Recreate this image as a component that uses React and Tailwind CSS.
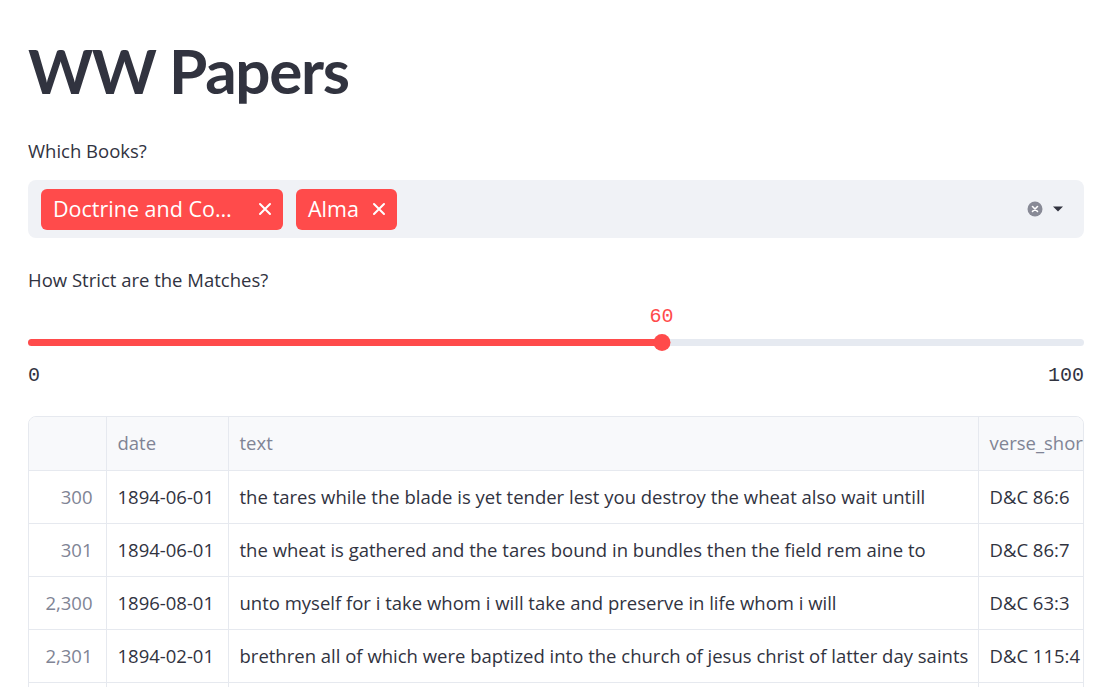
import React from 'react';

const rows = [
  { idx: '300', date: '1894-06-01', text: 'the tares while the blade is yet tender lest you destroy the wheat also wait untill', verse: 'D&C 86:6' },
  { idx: '301', date: '1894-06-01', text: 'the wheat is gathered and the tares bound in bundles then the field rem aine to', verse: 'D&C 86:7' },
  { idx: '2,300', date: '1896-08-01', text: 'unto myself for i take whom i will take and preserve in life whom i will', verse: 'D&C 63:3' },
  { idx: '2,301', date: '1894-02-01', text: 'brethren all of which were baptized into the church of jesus christ of latter day saints', verse: 'D&C 115:4' },
];

const mono = { fontFamily: '"Liberation Mono", monospace' };

function Tag({ label, width }) {
  return (
    <div className={`h-[41px] ${width} bg-[#ff4b4b] rounded-[6px] flex items-center justify-between pl-3 pr-[11px] text-white text-[21.5px]`}>
      <span className="whitespace-nowrap leading-[28px]">{label}</span>
      <svg width="14" height="14" viewBox="0 0 14 14" className="shrink-0 ml-2">
        <path d="M2 2 L12 12 M12 2 L2 12" stroke="white" strokeWidth="2" strokeLinecap="round" />
      </svg>
    </div>
  );
}

export default function App() {
  return (
    <div className="bg-white h-screen text-[#31333f] overflow-hidden" style={{ fontFamily: '"Open Sans", sans-serif' }}>
      <div className="pl-[28px] pr-[33px]">
        <h1 className="pt-[30px] text-[62px] font-bold leading-[80px] tracking-[-1.3px]" style={{ fontFamily: 'Lato, sans-serif' }}>WW Papers</h1>

        <div className="mt-[28px] text-[18.5px] leading-[25px]">Which Books?</div>
        <div className="mt-[17px] h-[58px] bg-[#f0f2f6] rounded-[8px] flex items-center pl-[13px] pr-[19px]">
          <div className="flex items-center gap-[13px]">
            <Tag label="Doctrine and Co…" width="w-[242px]" />
            <Tag label="Alma" width="w-[101px]" />
          </div>
          <div className="ml-auto flex items-center gap-[8px]">
            <svg width="16" height="16" viewBox="0 0 16 16">
              <circle cx="8" cy="8" r="7.5" fill="#888a96" />
              <path d="M5.5 5.5 L10.5 10.5 M10.5 5.5 L5.5 10.5" stroke="white" strokeWidth="1.6" strokeLinecap="round" />
            </svg>
            <svg width="14" height="14" viewBox="0 0 14 14">
              <path d="M2 4.5 L12 4.5 L7 9.5 Z" fill="#31333f" />
            </svg>
          </div>
        </div>

        <div className="mt-[29px] text-[18.5px] leading-[25px]">How Strict are the Matches?</div>
        <div className="relative mt-[12px] h-[86px]">
          <div className="absolute left-0 right-0 top-[35px] h-[7px] bg-[#e6eaf1] rounded-full" />
          <div className="absolute left-0 top-[35px] h-[7px] w-[60%] bg-[#ff4b4b] rounded-full" />
          <div className="absolute top-[30px] left-[60%] -translate-x-1/2 w-[17px] h-[17px] rounded-full bg-[#ff4b4b]" />
          <div className="absolute top-[1px] left-[60%] -translate-x-1/2 text-[#ff4b4b] text-[20px] leading-[24px]" style={mono}>60</div>
          <div className="absolute left-0 top-[60px] text-[20px] leading-[24px]" style={mono}>0</div>
          <div className="absolute right-0 top-[60px] text-[20px] leading-[24px]" style={mono}>100</div>
        </div>

        <div className="mt-[26px] border border-[#e6e9ef] rounded-t-[8px] overflow-hidden">
          <table className="w-full table-fixed border-collapse text-[18.5px]">
            <colgroup>
              <col className="w-[77px]" />
              <col className="w-[122px]" />
              <col className="w-[750px]" />
              <col />
            </colgroup>
            <thead>
              <tr className="bg-[#f8f9fb] h-[53px] text-[#808495]">
                <th className="font-normal border-r border-[#e6e9ef]"></th>
                <th className="font-normal text-left px-[11px] border-r border-[#e6e9ef]">date</th>
                <th className="font-normal text-left px-[11px] border-r border-[#e6e9ef]">text</th>
                <th className="font-normal text-left pl-[11px] whitespace-nowrap overflow-hidden">verse_short</th>
              </tr>
            </thead>
            <tbody>
              {rows.map((r) => (
                <tr key={r.idx} className="h-[53px] border-t border-[#e6e9ef]">
                  <td className="text-right px-[13px] text-[#808495] border-r border-[#e6e9ef]">{r.idx}</td>
                  <td className="px-[11px] border-r border-[#e6e9ef] whitespace-nowrap">{r.date}</td>
                  <td className="px-[11px] border-r border-[#e6e9ef] whitespace-nowrap overflow-hidden">{r.text}</td>
                  <td className="pl-[11px] whitespace-nowrap overflow-hidden">{r.verse}</td>
                </tr>
              ))}
              <tr className="h-[53px] border-t border-[#e6e9ef]">
                <td className="border-r border-[#e6e9ef]"></td>
                <td className="border-r border-[#e6e9ef]"></td>
                <td className="border-r border-[#e6e9ef]"></td>
                <td></td>
              </tr>
            </tbody>
          </table>
        </div>
      </div>
    </div>
  );
}
